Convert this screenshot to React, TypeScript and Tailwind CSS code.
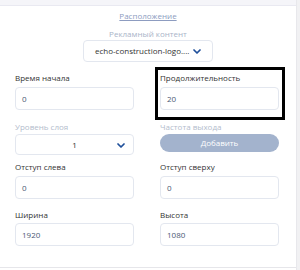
import React from "react";

const font = { fontFamily: '"Open Sans", "Noto Sans", sans-serif' };

function Chevron() {
  return (
    <svg width="8" height="5" viewBox="0 0 8 5" fill="none">
      <path d="M1 1 L4 4 L7 1" stroke="#1e4f9a" strokeWidth="1.7" strokeLinecap="round" strokeLinejoin="round" />
    </svg>
  );
}

function Field({ label, value, gap = 3 }: { label: string; value: string; gap?: number }) {
  return (
    <div className="flex flex-col">
      <div className="h-[12px] text-[8px] leading-[12px] text-[#333]">{label}</div>
      <div
        className={(gap === 3 ? "mt-[3px]" : "mt-[2px]") + " h-[23px] border border-[#e3e7ef] rounded-[4px] flex items-center pl-[6px] text-[8px] text-[#4a5874]"}
      >
        {value}
      </div>
    </div>
  );
}

export default function App() {
  return (
    <div className="w-[300px] h-[270px] bg-white flex overflow-hidden" style={font}>
      <div className="flex-1 flex flex-col">
        <div className="h-[6px] bg-[#f5f5f9] border-b border-[#e9e9f1]" />
        <div className="flex flex-col items-center">
          <div className="mt-[4px] h-[12px] text-[8px] leading-[12px] text-[#8d9cc0] underline">Расположение</div>
          <div className="mt-[6px] h-[12px] text-[8px] leading-[12px] text-[#a9b4c8]">Рекламный контент</div>
          <div className="w-[130px] h-[22px] border border-[#e3e7ef] rounded-[4px] flex items-center justify-between pl-[11px] pr-[11px] text-[8px] text-[#333]">
            <span>echo-construction-logo....</span>
            <Chevron />
          </div>
        </div>
        <div className="relative mt-[10px] pl-[15px] pr-[17px] grid grid-cols-2 gap-x-[26px]">
          <div className="absolute left-[155px] top-[-5px] w-[130px] h-[53px] border-[3px] border-black" />
          <Field label="Время начала" value="0" />
          <Field label="Продолжительность" value="20" />
          <div className="flex flex-col mt-[11px]">
            <div className="h-[12px] text-[8px] leading-[12px] text-[#b3bccc]">Уровень слоя</div>
            <div className="mt-[1px] h-[21px] border border-[#e3e7ef] rounded-[4px] flex items-center text-[8px] text-[#333] relative">
              <span className="flex-1 text-center">1</span>
              <span className="absolute right-[8px] top-[8px] flex"><Chevron /></span>
            </div>
          </div>
          <div className="flex flex-col mt-[11px]">
            <div className="h-[12px] text-[8px] leading-[12px] text-[#b3bccc]">Частота выхода</div>
            <div className="mt-[1px] h-[18px] rounded-full bg-[#a3b3cd] flex items-center justify-center text-[8px] text-white">
              Добавить
            </div>
          </div>
          <div className="mt-[6px]"><Field label="Отступ слева" value="0" /></div>
          <div className="mt-[6px]"><Field label="Отступ сверху" value="0" /></div>
          <div className="mt-[10px]"><Field label="Ширина" value="1920" gap={2} /></div>
          <div className="mt-[10px]"><Field label="Высота" value="1080" gap={2} /></div>
        </div>
        <div className="mt-auto mb-[2px] h-px bg-[#e6e6ea]" />
      </div>
      <div className="w-[4px] bg-[#f1f1f3] border-l border-[#e8e8ec]" />
    </div>
  );
}
